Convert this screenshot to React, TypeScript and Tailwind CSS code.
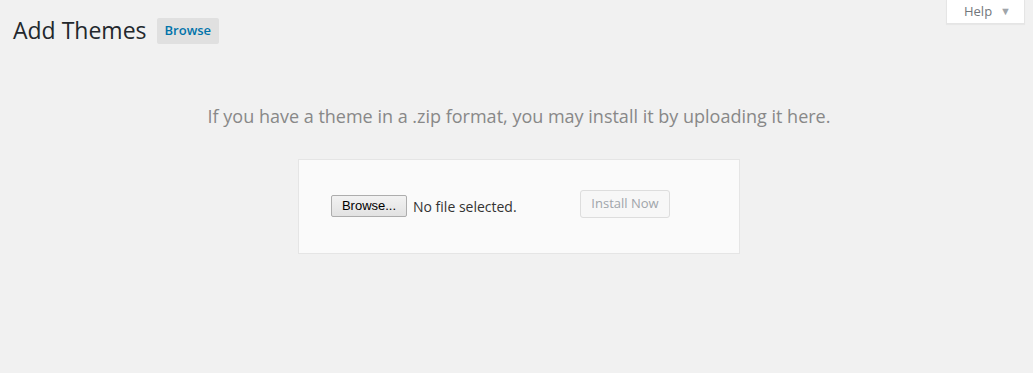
import React from 'react';

export default function App() {
  return (
    <div className="relative min-h-[373px] w-full bg-[#f1f1f1] text-[#444] font-['Open_Sans',sans-serif]">
      {/* Help tab (overlays the header) */}
      <div className="absolute right-[8px] top-0 flex h-[24px] items-center gap-[8px] border border-t-0 border-[#e5e5e5] bg-white pl-[17px] pr-[13px] text-[13px] text-[#72777c] shadow-[0_1px_1px_rgba(0,0,0,0.04)]">
        <span>Help</span>
        <span className="text-[11px] text-[#a0a5aa]">▼</span>
      </div>

      {/* Heading */}
      <div className="flex items-center pl-[13px] pt-[16px]">
        <h1 className="text-[23px] leading-[29px] font-normal text-[#23282d]">Add Themes</h1>
        <button className="ml-[10px] mt-[1px] h-[26px] rounded-[2px] bg-[#e0e0e0] px-[8px] text-[13px] font-semibold text-[#0073aa]">
          Browse
        </button>
      </div>

      {/* Upload */}
      <div className="flex flex-col items-center pl-[5px] pt-[59px]">
        <p className="text-[18px] leading-[24px] text-[#888]">
          If you have a theme in a .zip format, you may install it by uploading it here.
        </p>
        <form className="mt-[31px] flex items-center border border-[#e5e5e5] bg-[#fafafa] pb-[33px] pt-[28px] pl-[32px] pr-[69px]">
          <div className="flex h-[32px] w-[219px] items-center">
            <button
              type="button"
              className="mt-[4px] h-[22px] w-[76px] rounded-[2px] border border-[#adadad] bg-gradient-to-b from-[#f2f2f2] to-[#e2e2e2] font-['Liberation_Sans',sans-serif] text-[13px] text-black"
            >
              Browse...
            </button>
            <span className="ml-[6px] mt-[4px] text-[14px] text-[#333]">No file selected.</span>
          </div>
          <button
            type="button"
            disabled
            className="ml-[30px] h-[28px] w-[90px] rounded-[3px] border border-[#ddd] bg-[#f7f7f7] text-[13px] text-[#a0a5aa]"
          >
            Install Now
          </button>
        </form>
      </div>
    </div>
  );
}
